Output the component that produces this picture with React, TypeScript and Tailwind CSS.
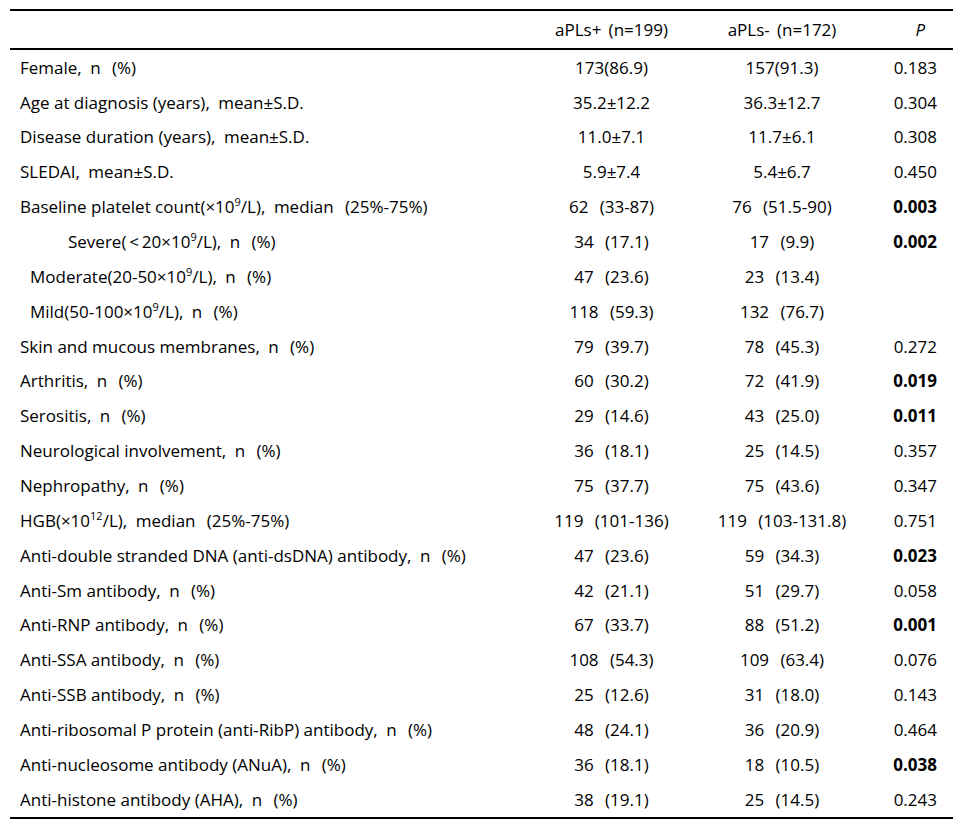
import React from 'react';

type Row = {
  label: React.ReactNode;
  indent?: string;
  a: string;
  b: string;
  p?: string;
  bold?: boolean;
};

// the source table uses full-width punctuation; spell it out as half-width + spacing
const lbl = (s: string) => s.replace(/，/g, ',\u2002').replace(/（/g, '\u2002\u2009(').replace(/）/g, ')');
const val = (s: string) => s.replace(/（/g, '\u2002\u2009(');

const Sup = ({ children }: { children: React.ReactNode }) => (
  <sup className="relative -top-[7px] text-[11px]">{children}</sup>
);

const rows: Row[] = [
  { label: lbl('Female，n（%）'), a: '173(86.9)', b: '157(91.3)', p: '0.183' },
  { label: lbl('Age at diagnosis (years)，mean±S.D.'), a: '35.2±12.2', b: '36.3±12.7', p: '0.304' },
  { label: lbl('Disease duration (years)，mean±S.D.'), a: '11.0±7.1', b: '11.7±6.1', p: '0.308' },
  { label: lbl('SLEDAI，mean±S.D.'), a: '5.9±7.4', b: '5.4±6.7', p: '0.450' },
  {
    label: <>Baseline platelet count(×10<Sup>9</Sup>/L){lbl('，median（25%-75%）')}</>,
    a: '62（33-87)',
    b: '76（51.5-90)',
    p: '0.003',
    bold: true,
  },
  {
    label: <>Severe({'\u2009<\u2009'}20×10<Sup>9</Sup>/L){lbl('，n（%）')}</>,
    indent: 'pl-[58px]',
    a: '34（17.1)',
    b: '17（9.9)',
    p: '0.002',
    bold: true,
  },
  { label: <>Moderate(20-50×10<Sup>9</Sup>/L){lbl('，n（%）')}</>, indent: 'pl-[20px]', a: '47（23.6)', b: '23（13.4)' },
  { label: <>Mild(50-100×10<Sup>9</Sup>/L){lbl('，n（%）')}</>, indent: 'pl-[20px]', a: '118（59.3)', b: '132（76.7)' },
  { label: lbl('Skin and mucous membranes，n（%）'), a: '79（39.7)', b: '78（45.3)', p: '0.272' },
  { label: lbl('Arthritis，n（%）'), a: '60（30.2)', b: '72（41.9)', p: '0.019', bold: true },
  { label: lbl('Serositis，n（%）'), a: '29（14.6)', b: '43（25.0)', p: '0.011', bold: true },
  { label: lbl('Neurological involvement，n（%）'), a: '36（18.1)', b: '25（14.5)', p: '0.357' },
  { label: lbl('Nephropathy，n（%）'), a: '75（37.7)', b: '75（43.6)', p: '0.347' },
  {
    label: <>HGB(×10<Sup>12</Sup>/L){lbl('，median（25%-75%）')}</>,
    a: '119（101-136)',
    b: '119（103-131.8)',
    p: '0.751',
  },
  { label: lbl('Anti-double stranded DNA (anti-dsDNA) antibody，n（%）'), a: '47（23.6)', b: '59（34.3)', p: '0.023', bold: true },
  { label: lbl('Anti-Sm antibody，n（%）'), a: '42（21.1)', b: '51（29.7)', p: '0.058' },
  { label: lbl('Anti-RNP antibody，n（%）'), a: '67（33.7)', b: '88（51.2)', p: '0.001', bold: true },
  { label: lbl('Anti-SSA antibody，n（%）'), a: '108（54.3)', b: '109（63.4)', p: '0.076' },
  { label: lbl('Anti-SSB antibody，n（%）'), a: '25（12.6)', b: '31（18.0)', p: '0.143' },
  { label: lbl('Anti-ribosomal P protein (anti-RibP) antibody，n（%）'), a: '48（24.1)', b: '36（20.9)', p: '0.464' },
  { label: lbl('Anti-nucleosome antibody (ANuA)，n（%）'), a: '36（18.1)', b: '18（10.5)', p: '0.038', bold: true },
  { label: lbl('Anti-histone antibody (AHA)，n（%）'), a: '38（19.1)', b: '25（14.5)', p: '0.243' },
];

const cols = 'grid grid-cols-[515px_173px_168px_87px]';

export default function App() {
  return (
    <div
      className="min-h-[827px] w-[955px] bg-white pt-[9px] text-[17px] text-black"
      style={{ fontFamily: '"Open Sans", "Noto Sans", sans-serif' }}
    >
      <div className="ml-[10px] w-[943px] border-y-2 border-black">
        {/* header */}
        <div className={`${cols} h-[39px] items-center border-b-2 border-black`}>
          <div />
          <div className="text-center whitespace-pre">{'aPLs+\u00a0\u2009(n=199)'}</div>
          <div className="text-center whitespace-pre">{'aPLs-\u00a0\u2009(n=172)'}</div>
          <div className="pr-[28px] text-right italic">P</div>
        </div>

        {rows.map((r, i) => (
          <div key={i} className={`${cols} h-[34.86px] items-center`}>
            <div className={`whitespace-pre ${r.indent ?? 'pl-[10px]'}`}>{r.label}</div>
            <div className="text-center whitespace-pre">{val(r.a)}</div>
            <div className="text-center whitespace-pre">{val(r.b)}</div>
            <div className={`pr-[16px] text-right ${r.bold ? 'font-bold' : ''}`}>{r.p}</div>
          </div>
        ))}
      </div>
    </div>
  );
}
